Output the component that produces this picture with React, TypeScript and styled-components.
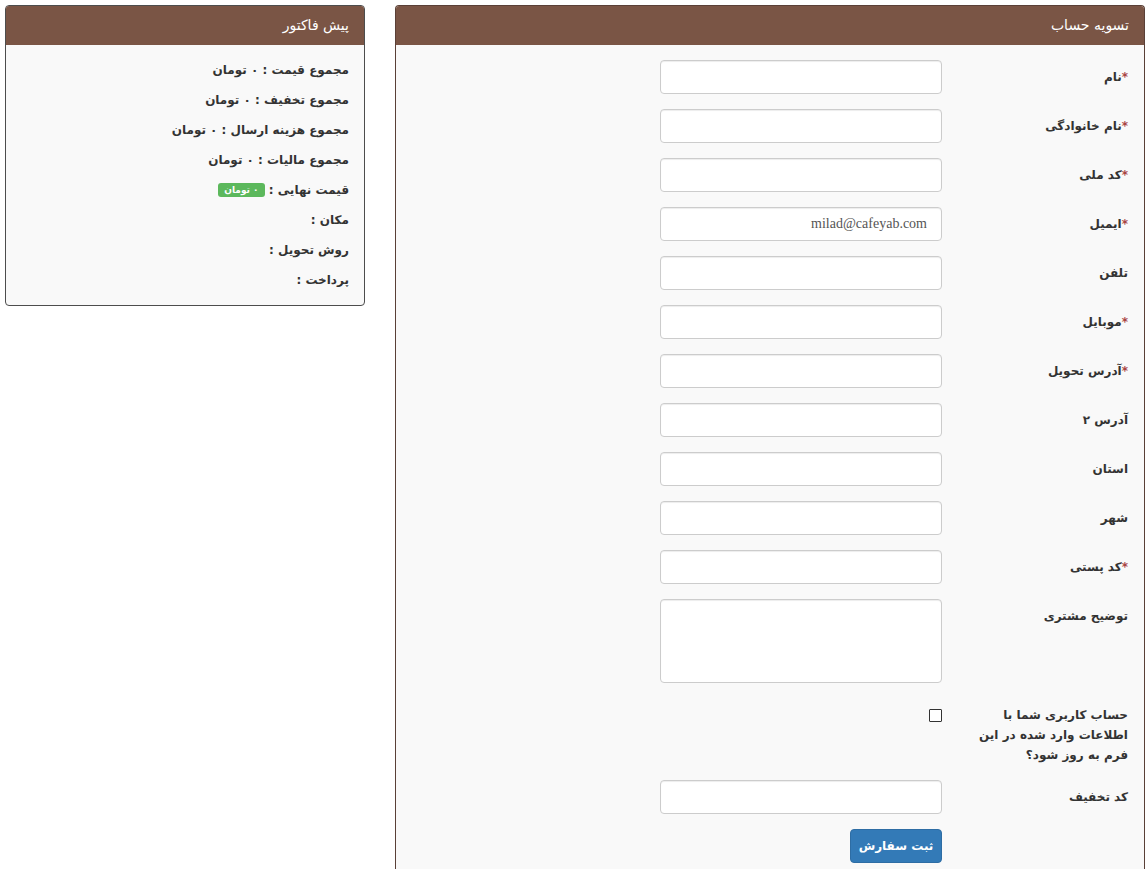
import styled, { createGlobalStyle } from "styled-components";

const GlobalStyle = createGlobalStyle`
  html, body {
    margin: 0;
    padding: 0;
    background: #fff;
  }
  body {
    font-family: "DejaVu Sans", "Noto Sans", sans-serif;
    font-size: 13px;
    color: #333;
    direction: rtl;
  }
  * {
    box-sizing: border-box;
  }
`;

const Page = styled.div`
  display: flex;
  align-items: flex-start;
  gap: 30px;
  padding: 5px 2px 0 5px;
`;

const Panel = styled.div<{ $width: number; $open?: boolean }>`
  width: ${(p) => p.$width}px;
  flex: none;
  background: #f9f9f9;
  border: 1px solid ${(p) => (p.$open ? "#5a4037" : "#4d4d4d")};
  border-radius: ${(p) => (p.$open ? "4px 4px 0 0" : "4px")};
  ${(p) => (p.$open ? "border-bottom: none;" : "")}
  overflow: hidden;
`;

const PanelHeading = styled.div`
  height: 39px;
  background: #7a5545;
  color: #fff;
  font-size: 14px;
  line-height: 39px;
  padding: 0 15px;
`;

const SummaryBody = styled.div`
  padding: 15px 15px 15px 15px;
`;

const SummaryLine = styled.p`
  margin: 0 0 10px;
  line-height: 20px;
  font-weight: bold;
  font-size: 12px;
  &:last-child {
    margin-bottom: 0;
  }
`;

const Badge = styled.span`
  display: inline-block;
  background: #5cb85c;
  color: #fff;
  font-size: 9px;
  font-weight: bold;
  line-height: 14px;
  padding: 0 6px;
  border-radius: 3px;
  vertical-align: 1px;
`;

const FormBody = styled.div`
  padding: 15px 16px 6px 0;
  display: flex;
  flex-direction: column;
  gap: 15px;
`;

const Row = styled.div`
  display: flex;
  align-items: flex-start;
`;

const Label = styled.label`
  width: 160px;
  margin-left: 26px;
  padding-top: 7px;
  line-height: 20px;
  font-weight: bold;
  font-size: 12px;
`;

const Star = styled.span`
  color: #a94442;
`;

const Field = styled.div`
  width: 282px;
  display: flex;
  justify-content: flex-start;
`;

const Input = styled.input`
  width: 282px;
  height: 34px;
  padding: 6px 14px;
  background: #fff;
  border: 1px solid #ccc;
  border-radius: 4px;
  box-shadow: inset 0 1px 1px rgba(0, 0, 0, 0.075);
  font-family: "Liberation Serif", serif;
  font-size: 14px;
  color: #555;
  direction: rtl;
  outline: none;
`;

const TextArea = styled.textarea`
  width: 282px;
  height: 84px;
  background: #fff;
  border: 1px solid #ccc;
  border-radius: 4px;
  box-shadow: inset 0 1px 1px rgba(0, 0, 0, 0.075);
  resize: none;
  outline: none;
`;

const CheckBox = styled.span`
  display: block;
  width: 13px;
  height: 13px;
  margin-top: 11px;
  border: 1px solid #333;
  border-radius: 1px;
  background: #fff;
`;

const CheckLabel = styled(Label)`
  line-height: 20px;
`;

const SubmitButton = styled.button`
  width: 92px;
  height: 34px;
  background: #337ab7;
  border: 1px solid #2e6da4;
  border-radius: 4px;
  color: #fff;
  font-family: "DejaVu Sans", sans-serif;
  font-weight: bold;
  font-size: 12px;
  padding: 0;
`;

const fields: { label: string; required?: boolean; value?: string }[] = [
  { label: "نام", required: true },
  { label: "نام خانوادگی", required: true },
  { label: "کد ملی", required: true },
  { label: "ایمیل", required: true, value: "milad@cafeyab.com" },
  { label: "تلفن" },
  { label: "موبایل", required: true },
  { label: "آدرس تحویل", required: true },
  { label: "آدرس ۲" },
  { label: "استان" },
  { label: "شهر" },
  { label: "کد پستی", required: true },
];

const summary = [
  "مجموع قیمت : ۰ تومان",
  "مجموع تخفیف : ۰ تومان",
  "مجموع هزینه ارسال : ۰ تومان",
  "مجموع مالیات : ۰ تومان",
];

const App = () => {
  return (
    <>
      <GlobalStyle />
      <Page>
        <Panel $width={750} $open>
          <PanelHeading>تسویه حساب</PanelHeading>
          <FormBody>
            {fields.map((f) => (
              <Row key={f.label}>
                <Label>
                  {f.required && <Star>*</Star>}
                  {f.label}
                </Label>
                <Field>
                  <Input defaultValue={f.value} />
                </Field>
              </Row>
            ))}
            <Row>
              <Label>توضیح مشتری</Label>
              <Field>
                <TextArea />
              </Field>
            </Row>
            <Row>
              <CheckLabel>
                حساب کاربری شما با اطلاعات وارد شده در این فرم به روز شود؟
              </CheckLabel>
              <Field>
                <CheckBox />
              </Field>
            </Row>
            <Row>
              <Label>کد تخفیف</Label>
              <Field>
                <Input />
              </Field>
            </Row>
            <Row>
              <Label />
              <Field>
                <SubmitButton>ثبت سفارش</SubmitButton>
              </Field>
            </Row>
          </FormBody>
        </Panel>
        <Panel $width={360}>
          <PanelHeading>پیش فاکتور</PanelHeading>
          <SummaryBody>
            {summary.map((s) => (
              <SummaryLine key={s}>{s}</SummaryLine>
            ))}
            <SummaryLine>
              قیمت نهایی : <Badge>۰ تومان</Badge>
            </SummaryLine>
            <SummaryLine>مکان :</SummaryLine>
            <SummaryLine>روش تحویل :</SummaryLine>
            <SummaryLine>پرداخت :</SummaryLine>
          </SummaryBody>
        </Panel>
      </Page>
    </>
  );
};

export default App;
